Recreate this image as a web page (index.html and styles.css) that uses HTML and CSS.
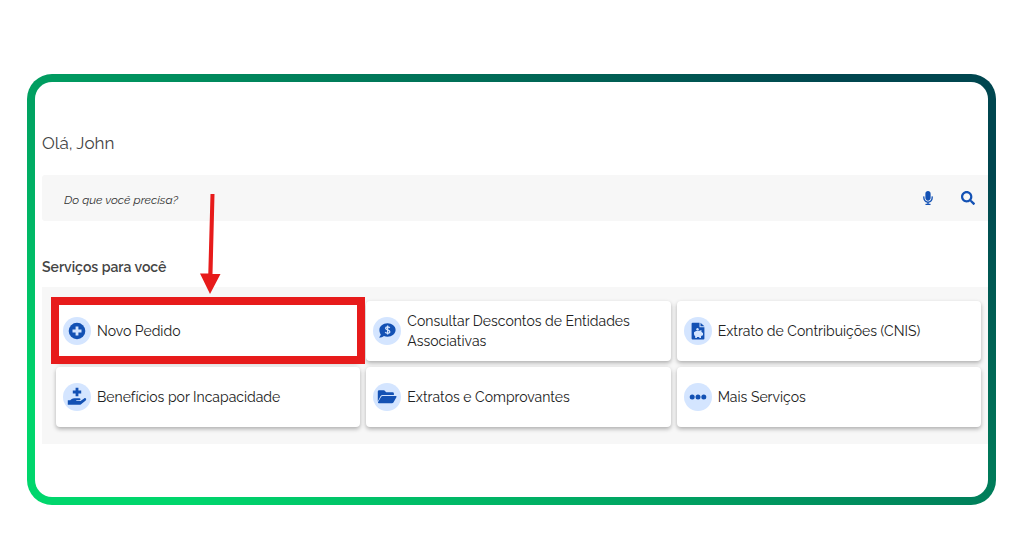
FILE: index.html
```
<!DOCTYPE html>
<html lang="pt-BR">
<head>
    <meta charset="UTF-8">
    <meta name="viewport" content="width=device-width, initial-scale=1.0">
    <title>Serviços</title>
    <link rel="stylesheet" href="styles.css">
</head>
<body>
    <main class="frame">
        <h1 class="greeting">Olá, John</h1>

        <form class="search" role="search">
            <input type="text" class="search-input" placeholder="Do que você precisa?" aria-label="Do que você precisa?">
            <button type="button" class="search-button" aria-label="Falar">
                <svg class="icon-small" viewBox="0 0 352 512"><path d="M176 352c53 0 96-43 96-96V96c0-53-43-96-96-96S80 43 80 96v160c0 53 43 96 96 96zm160-160h-16c-9 0-16 7-16 16v48c0 75-64 134-140 127-66-6-116-66-116-133v-42c0-9-7-16-16-16H16c-9 0-16 7-16 16v40c0 90 64 170 152 182v34H96c-9 0-16 7-16 16v16c0 9 7 16 16 16h160c9 0 16-7 16-16v-16c0-9-7-16-16-16h-56v-34c86-12 152-85 152-174v-48c0-9-7-16-16-16z"/></svg>
            </button>
            <button type="submit" class="search-button" aria-label="Buscar">
                <svg class="icon-small" viewBox="0 0 512 512"><path d="M505 443 405 343c-4-4-11-7-17-7h-16c28-35 44-80 44-128C416 93 323 0 208 0S0 93 0 208s93 208 208 208c48 0 93-16 128-44v16c0 6 3 13 7 17l100 100c9 9 25 9 34 0l28-28c9-10 9-25 0-34zM208 336c-71 0-128-57-128-128S137 80 208 80s128 57 128 128-57 128-128 128z"/></svg>
            </button>
        </form>

        <h2 class="section-title">Serviços para você</h2>

        <nav class="services">
            <a href="#" class="card">
                <span class="icon">
                    <svg viewBox="0 0 18 18"><circle cx="9" cy="9" r="8.300"/><path class="cut" d="M7.600 4.500h2.800v3.100h3.100v2.800h-3.100v3.100H7.600v-3.100H4.500V7.600h3.100z"/></svg>
                </span>
                Novo Pedido
                <span class="highlight">
                    <svg class="arrow" viewBox="0 0 24 102"><path d="M12.500 2h4l-2 80h8L12 102 2 81.500h8.300z"/></svg>
                </span>
            </a>
            <a href="#" class="card">
                <span class="icon">
                    <svg viewBox="0 0 18 18"><path d="M9.500 1.300c4.500 0 8.100 3 8.100 6.700s-3.600 6.700-8.100 6.700c-1.300 0-2.500-.2-3.600-.7-1.300 1-2.900 1.600-4.900 1.600.9-1 1.600-2.100 1.700-3.300C1.900 11.200 1.400 9.600 1.400 8c0-3.700 3.600-6.700 8.100-6.700z"/><path class="line" d="M11.700 6c-.4-.8-1.100-1.100-2.100-1.100-1.200 0-2 .5-2 1.400 0 2.100 4.200 1.200 4.200 3.400 0 1-.9 1.500-2.200 1.500-1.100 0-1.900-.4-2.300-1.200M9.600 3.500v9"/></svg>
                </span>
                Consultar Descontos de Entidades Associativas
            </a>
            <a href="#" class="card">
                <span class="icon">
                    <svg viewBox="0 0 18 18"><path d="M3.600.8h6.900v4.400h4.900v11.200q0 1-1 1H3.600q-1 0-1-1V1.800q0-1 1-1z"/><path d="M11.500.8 15.400 4.300h-3.900z"/><circle class="cut" cx="8.500" cy="7.300" r="1.200"/><path class="cut" d="M5 10.300c.4 0 .7-.2.8-.5.700-.7 1.700-1 2.900-1h1.900l1.900-.9-.2 1.600c.4.300.7.700.9 1.200h.8v2.500l-1.400.5-.6.700v1.700h-1.700v-1.200H7.900v1.200H6.200v-1.800c-.8-.6-1.200-1.400-1.200-2.300z"/></svg>
                </span>
                Extrato de Contribuições (CNIS)
            </a>
            <a href="#" class="card">
                <span class="icon">
                    <svg class="icon-large" viewBox="0 0 20 20"><path d="M8.600.8h2.800v2.800h2.800v2.800h-2.800v2.800H8.600V6.400H5.800V3.600h2.800z"/><path d="M.8 13.200h2.400l1.500-1.100c.8-.6 1.700-.9 2.700-.9h5c1.400 0 1.500 2 .1 2H9.300v.7h4.200l3.600-2.500c1.500-1 2.900.9 1.600 2l-4.300 3.500c-.7.600-1.400.8-2.300.8H.8z"/></svg>
                </span>
                Benefícios por Incapacidade
            </a>
            <a href="#" class="card">
                <span class="icon">
                    <svg class="icon-large" viewBox="0 0 20 20"><path d="M.8 14.500V4.600q0-1.400 1.400-1.400h5l2 2h6.300q1.400 0 1.400 1.400v1.300H5.600c-.9 0-1.600.4-2 1.200z"/><path d="M5.600 9h13.100c.7 0 1 .6.700 1.200l-3 5.200c-.3.500-.8.800-1.400.8H1.700c-.6 0-.9-.6-.6-1.100l3.100-5.300c.3-.5.800-.8 1.400-.8z"/></svg>
                </span>
                Extratos e Comprovantes
            </a>
            <a href="#" class="card">
                <span class="icon">
                    <svg viewBox="0 0 18 18"><circle cx="3.200" cy="9" r="2.500"/><circle cx="9" cy="9" r="2.500"/><circle cx="14.800" cy="9" r="2.500"/></svg>
                </span>
                Mais Serviços
            </a>
        </nav>
    </main>
</body>
</html>
```
FILE: styles.css
```
* {
    box-sizing: border-box;
}

body {
    margin: 0;
    padding: 74px 28px 31px 27px;
    background-color: white;
    color: #222;
    font-family: Raleway, Lato, sans-serif;
}

.frame {
    padding: 49px 0 53px 7px;
    border: 8px solid transparent;
    border-radius: 25px;
    background: linear-gradient(white, white) padding-box,
                linear-gradient(32deg, #00d66c 10%, #00464f 90%) border-box;
}

.greeting {
    margin: 0 0 20px;
    color: #444;
    font-size: 17px;
    font-weight: normal;
    line-height: 24px;
}

.search {
    display: flex;
    align-items: center;
    height: 46px;
    padding: 0 13px 0 22px;
    border-radius: 3px 0 0 3px;
    background-color: #f7f7f7;
}

.search-input {
    flex: 1;
    padding: 4px 0 0;
    border: none;
    outline: none;
    background: none;
    font-family: inherit;
    font-size: 12px;
    font-style: italic;
}

.search-input::placeholder {
    color: #333;
    opacity: 1;
}

.search-button {
    margin-left: 26px;
    padding: 0;
    border: none;
    background: none;
    cursor: pointer;
}

.icon-small {
    display: block;
    width: 14px;
    height: 14px;
    fill: #1351b4;
}

.section-title {
    margin: 36px 0 10px;
    color: #444;
    font-size: 14px;
    font-weight: 600;
    line-height: 20px;
}

.services {
    display: grid;
    grid-template-columns: repeat(3, 1fr);
    grid-auto-rows: 60px;
    gap: 6px;
    padding: 14px 7px 17px 14px;
    background-color: #f7f7f7;
}

.card {
    position: relative;
    display: flex;
    align-items: center;
    gap: 6px;
    padding: 0 7px;
    border-radius: 4px;
    background-color: white;
    box-shadow: 0 2px 4px rgba(0, 0, 0, 0.3);
    color: #222;
    font-size: 14px;
    line-height: 20px;
    text-decoration: none;
}

.icon {
    display: flex;
    flex: none;
    align-items: center;
    justify-content: center;
    width: 28px;
    height: 28px;
    border-radius: 50%;
    background-color: #d4e5ff;
}

.icon svg {
    width: 18px;
    height: 18px;
    fill: #1351b4;
}

.icon .icon-large {
    width: 20px;
    height: 20px;
}

.icon .cut {
    fill: #d4e5ff;
}

.icon .line {
    fill: none;
    stroke: #d4e5ff;
    stroke-width: 1.300;
}

/* red box and arrow over the first card */
.highlight {
    position: absolute;
    z-index: 1;
    top: -4px;
    right: -5px;
    bottom: -3px;
    left: -5px;
    border: 8px solid #e71b1b;
}

.arrow {
    position: absolute;
    bottom: calc(100% + 11px);
    left: 139px;
    width: 24px;
    height: 102px;
    fill: #e71b1b;
}
```
